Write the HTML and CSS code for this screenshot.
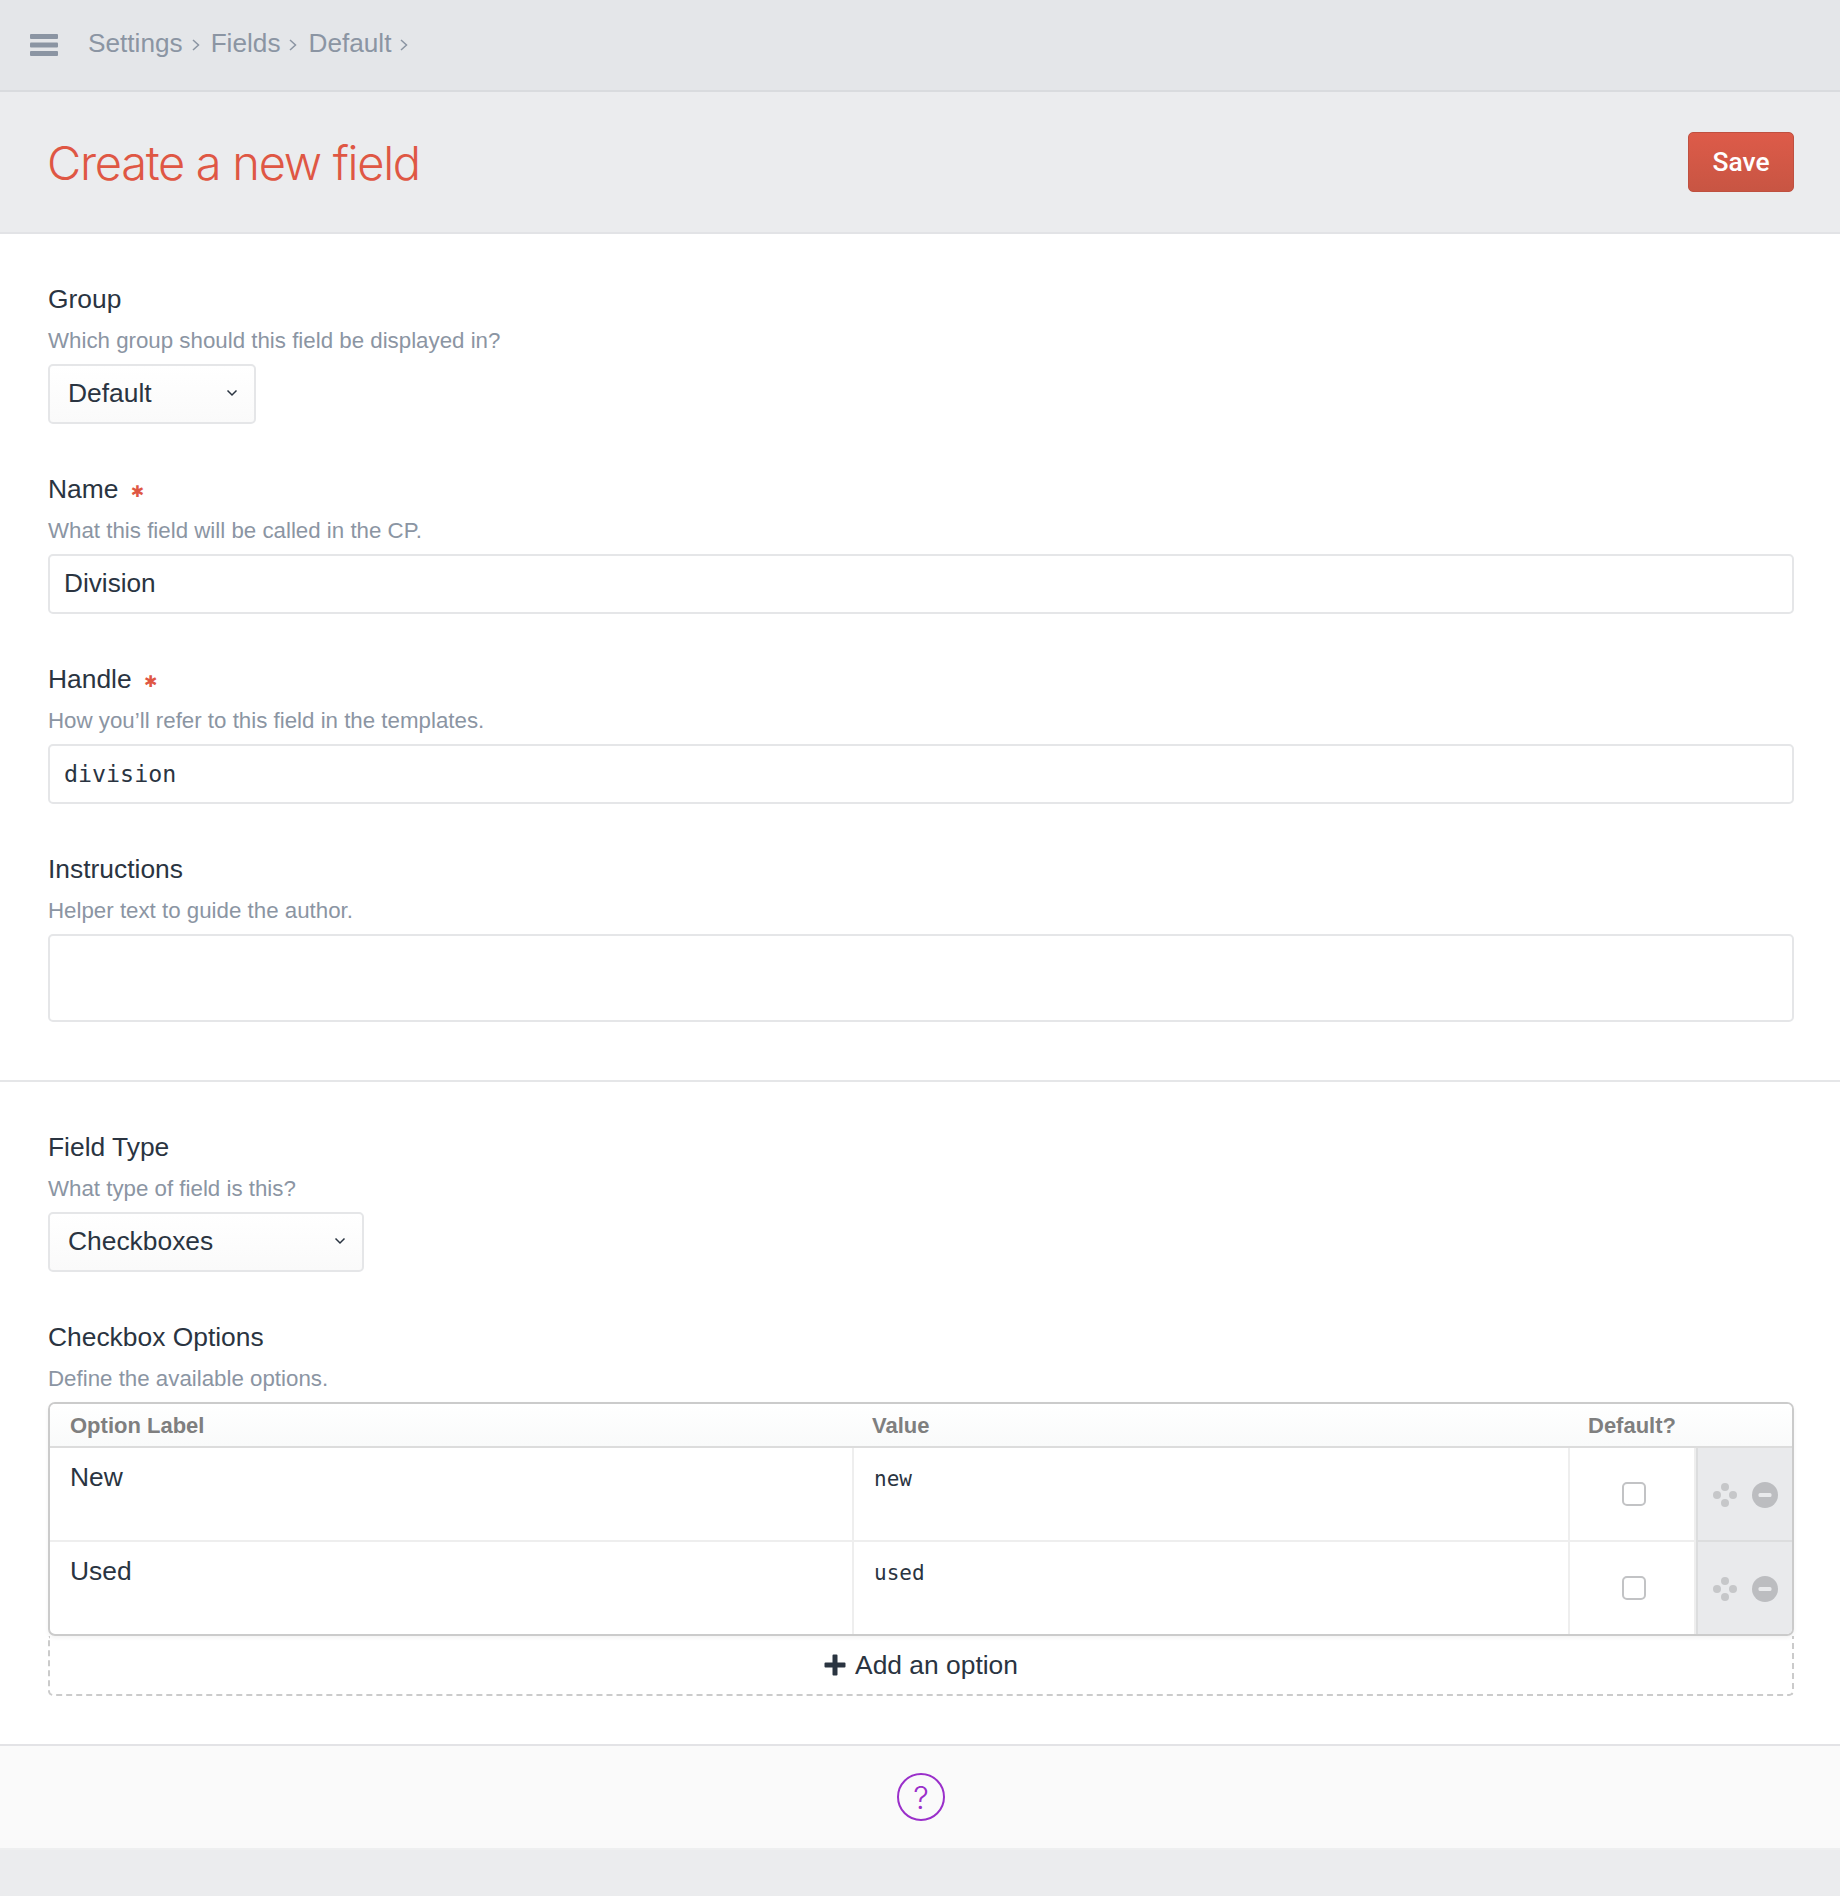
FILE: index.html
```html
<!DOCTYPE html>
<html lang="en">
<head>
    <meta charset="UTF-8">
    <meta name="viewport" content="width=device-width, initial-scale=1.0">
    <title>Create a new field</title>
    <link rel="stylesheet" href="styles.css">
</head>
<body>
    <nav class="topbar">
        <svg class="menu-icon" width="28" height="22" viewBox="0 0 28 22"><rect width="28" height="5" y="0" rx="1"/><rect width="28" height="5" y="8.5" rx="1"/><rect width="28" height="5" y="17" rx="1"/></svg>
        <a class="crumb">Settings</a>
        <svg class="crumb-sep" width="8" height="14" viewBox="0 0 8 14"><path d="M1 2l5.5 5L1 12"/></svg>
        <a class="crumb">Fields</a>
        <svg class="crumb-sep" width="8" height="14" viewBox="0 0 8 14"><path d="M1 2l5.5 5L1 12"/></svg>
        <a class="crumb">Default</a>
        <svg class="crumb-sep" width="8" height="14" viewBox="0 0 8 14"><path d="M1 2l5.5 5L1 12"/></svg>
    </nav>

    <header class="page-head">
        <h1>Create a new field</h1>
        <button class="btn-save">Save</button>
    </header>

    <main>
        <section class="form-section first">
            <div class="field">
                <label>Group</label>
                <p class="help">Which group should this field be displayed in?</p>
                <div class="select select-group">
                    <span>Default</span>
                    <svg width="12" height="8" viewBox="0 0 12 8"><path d="M1.5 1.5L6 6l4.500-4.500"/></svg>
                </div>
            </div>
            <div class="field">
                <label>Name <span class="req">✱</span></label>
                <p class="help">What this field will be called in the CP.</p>
                <input class="input" type="text" value="Division">
            </div>
            <div class="field">
                <label>Handle <span class="req">✱</span></label>
                <p class="help">How you’ll refer to this field in the templates.</p>
                <input class="input mono" type="text" value="division">
            </div>
            <div class="field">
                <label>Instructions</label>
                <p class="help">Helper text to guide the author.</p>
                <textarea class="input textarea"></textarea>
            </div>
        </section>

        <section class="form-section second">
            <div class="field">
                <label>Field Type</label>
                <p class="help">What type of field is this?</p>
                <div class="select select-type">
                    <span>Checkboxes</span>
                    <svg width="12" height="8" viewBox="0 0 12 8"><path d="M1.5 1.5L6 6l4.500-4.500"/></svg>
                </div>
            </div>
            <div class="field">
                <label>Checkbox Options</label>
                <p class="help">Define the available options.</p>
                <table class="options">
                    <thead>
                        <tr>
                            <th class="col-label">Option Label</th>
                            <th class="col-value">Value</th>
                            <th class="col-default">Default?</th>
                            <th class="col-actions"></th>
                        </tr>
                    </thead>
                    <tbody>
                        <tr>
                            <td class="cell-label">New</td>
                            <td class="cell-value">new</td>
                            <td class="cell-default"><span class="checkbox"></span></td>
                            <td class="cell-actions">
                                <div class="actions">
                                    <svg width="24" height="24" viewBox="0 0 24 24"><circle cx="12" cy="4" r="4"/><circle cx="4" cy="12" r="4"/><circle cx="20" cy="12" r="4"/><circle cx="12" cy="20" r="4"/></svg>
                                    <svg width="26" height="26" viewBox="0 0 26 26"><circle class="del" cx="13" cy="13" r="13"/><rect class="del-bar" x="6.500" y="11" width="13" height="4" rx="1.500"/></svg>
                                </div>
                            </td>
                        </tr>
                        <tr>
                            <td class="cell-label">Used</td>
                            <td class="cell-value">used</td>
                            <td class="cell-default"><span class="checkbox"></span></td>
                            <td class="cell-actions">
                                <div class="actions">
                                    <svg width="24" height="24" viewBox="0 0 24 24"><circle cx="12" cy="4" r="4"/><circle cx="4" cy="12" r="4"/><circle cx="20" cy="12" r="4"/><circle cx="12" cy="20" r="4"/></svg>
                                    <svg width="26" height="26" viewBox="0 0 26 26"><circle class="del" cx="13" cy="13" r="13"/><rect class="del-bar" x="6.500" y="11" width="13" height="4" rx="1.500"/></svg>
                                </div>
                            </td>
                        </tr>
                    </tbody>
                </table>
                <div class="add-option">
                    <svg width="22" height="22" viewBox="0 0 22 22"><path d="M8.500 1.500a1 1 0 0 1 1-1h3a1 1 0 0 1 1 1v7h7a1 1 0 0 1 1 1v3a1 1 0 0 1-1 1h-7v7a1 1 0 0 1-1 1h-3a1 1 0 0 1-1-1v-7h-7a1 1 0 0 1-1-1v-3a1 1 0 0 1 1-1h7z"/></svg>
                    <span>Add an option</span>
                </div>
            </div>
        </section>
    </main>

    <footer class="foot">
        <span class="help-circle">?</span>
    </footer>
</body>
</html>
```

FILE: styles.css
```css
/* Global styles */
body {
    font-family: 'Liberation Sans', Arial, sans-serif;
    margin: 0;
    padding: 0;
    background: #ebecee;
    color: #2a3441;
    font-size: 26.4px;
}

/* Top bar */
.topbar {
    display: flex;
    align-items: center;
    height: 90px;
    padding-left: 30px;
    background: #e4e6e9;
    border-bottom: 2px solid #d9dbde;
    color: #8b95a3;
}

.menu-icon {
    fill: #8b95a3;
    margin-right: 30px;
}

.crumb {
    position: relative;
    top: -2px;
    font-size: 26.2px;
}

.crumb-sep {
    margin: 0 11px 0 9px;
    fill: none;
    stroke: #8b95a3;
    stroke-width: 1.5;
}

/* Page heading */
.page-head {
    display: flex;
    align-items: center;
    justify-content: space-between;
    height: 140px;
    padding: 0 46px 0 47px;
    background: #ebecee;
    border-bottom: 2px solid #e2e3e6;
}

.page-head h1 {
    margin: 0;
    font-family: 'Inter', 'Liberation Sans', sans-serif;
    font-size: 47px;
    font-weight: 300;
    letter-spacing: -1.3px;
    color: #df5744;
}

.btn-save {
    width: 106px;
    height: 60px;
    background: linear-gradient(#dd5b49, #c85543);
    border: 1px solid #bf5040;
    border-radius: 5px;
    color: #fff;
    font-family: 'Roboto', sans-serif;
    font-size: 26.4px;
    font-weight: 500;
}

/* Main form */
main {
    background: #fff;
}

.form-section {
    padding: 47px 46px 0 48px;
}

.form-section.first {
    padding-bottom: 58px;
    border-bottom: 2px solid #e5e6e8;
}

.form-section.second {
    padding-bottom: 48px;
}

.field {
    margin-bottom: 47px;
}

.field:last-child {
    margin-bottom: 0;
}

.field label {
    display: block;
    height: 36px;
    line-height: 36px;
    margin-bottom: 9px;
}

.req {
    display: inline-block;
    vertical-align: 1px;
    height: 24px;
    line-height: 24px;
    font-family: 'DejaVu Sans', sans-serif;
    font-size: 16px;
    color: #df5744;
    margin-left: 5px;
}

.help {
    margin: 0 0 8px;
    height: 30px;
    line-height: 30px;
    font-size: 22.3px;
    color: #8b95a3;
}

.input {
    display: block;
    box-sizing: border-box;
    width: 100%;
    height: 60px;
    padding: 0 14px 2px;
    background: #fff;
    border: 2px solid #e5e6e8;
    border-radius: 5px;
    color: inherit;
    font-family: inherit;
    font-size: 26.2px;
}

.input.mono {
    font-family: 'DejaVu Sans Mono', monospace;
    font-size: 23.300px;
}

.input.textarea {
    height: 88px;
    resize: none;
}

.select {
    display: flex;
    align-items: center;
    justify-content: space-between;
    box-sizing: border-box;
    height: 60px;
    padding: 0 16px 2px 18px;
    background: linear-gradient(#fff, #fafafa);
    border: 2px solid #e5e6e8;
    border-radius: 5px;
}

.select svg {
    fill: none;
    stroke: #2a3441;
    stroke-width: 1.5;
}

.select-group {
    width: 208px;
}

.select-type {
    width: 316px;
}

/* Options table */
.options {
    box-sizing: border-box;
    width: 100%;
    table-layout: fixed;
    border-collapse: separate;
    border-spacing: 0;
    border: 2px solid #cbcbcb;
    border-radius: 7px;
    overflow: hidden;
    box-shadow: 0 2px 4px rgba(0, 0, 0, 0.05);
}

.options th {
    box-sizing: border-box;
    height: 44px;
    padding: 2px 0 0 18px;
    background: linear-gradient(#fff, #f9fafa);
    border-bottom: 2px solid #dcdcdc;
    text-align: left;
    font-size: 22px;
    color: #7f7f7f;
}

.options .col-label {
    width: 804px;
    padding-left: 20px;
}

.options .col-value {
    width: 716px;
}

.options .col-default {
    width: 126px;
}

.options .col-actions {
    width: 96px;
    padding: 0;
}

.options td {
    box-sizing: border-box;
    height: 94px;
    padding: 0;
    vertical-align: top;
    border-bottom: 2px solid #eeeeee;
    border-right: 2px solid #eeeeee;
}

.options tr:last-child td {
    height: 92px;
    border-bottom: 0;
}

.options .cell-label {
    padding: 14px 20px 0;
}

.options .cell-value {
    padding: 19px 20px 0;
    font-family: 'DejaVu Sans Mono', monospace;
    font-size: 21px;
}

.options .cell-default {
    padding: 0 0 3px 4px;
    vertical-align: middle;
    text-align: center;
}

.checkbox {
    display: inline-block;
    vertical-align: middle;
    box-sizing: border-box;
    width: 24px;
    height: 24px;
    border: 2px solid #c2c3c5;
    border-radius: 5px;
}

.options .cell-actions {
    padding-top: 1px;
    vertical-align: middle;
    background: #e9eaec;
    border-left: 2px solid #dcddde;
    border-right: 0;
    border-bottom-color: #dcddde;
}

.actions {
    display: flex;
    align-items: center;
    justify-content: center;
    gap: 15px;
}

.actions svg {
    fill: #c6c7c9;
}

.del {
    fill: #bcbdc0;
}

.del-bar {
    fill: #e9eaec;
}

.add-option {
    display: flex;
    align-items: center;
    justify-content: center;
    gap: 9px;
    box-sizing: border-box;
    height: 60px;
    border: 2px dashed #cbcbcb;
    border-top: 0;
    border-radius: 0 0 5px 5px;
    font-size: 26.400px;
}

.add-option svg {
    fill: #2a3441;
}

/* Footer */
.foot {
    display: flex;
    align-items: center;
    justify-content: center;
    height: 102px;
    padding-left: 2px;
    background: #fafafa;
    border-top: 2px solid #e3e3e6;
    border-bottom: 2px solid #eeeff0;
}

.help-circle {
    display: flex;
    align-items: center;
    justify-content: center;
    box-sizing: border-box;
    width: 48px;
    height: 48px;
    border: 2px solid #9a2fca;
    border-radius: 50%;
    color: #9a2fca;
    font-family: 'Inter', sans-serif;
    font-size: 31px;
    font-weight: 300;
}
```
